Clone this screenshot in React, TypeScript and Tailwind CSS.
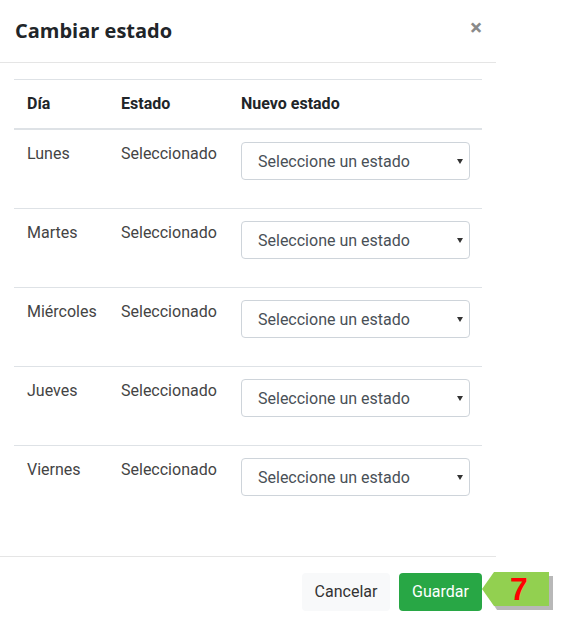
const days = ["Lunes", "Martes", "Miércoles", "Jueves", "Viernes"];

function EstadoSelect() {
  return (
    <div className="relative mb-4 h-[38px] w-[229px] rounded-[4px] border border-[#ced4da] bg-white">
      <span className="absolute left-[16px] top-[7px] text-[16px] leading-[24px] text-[#495057]">
        Seleccione un estado
      </span>
      <svg
        className="absolute right-[6px] top-[16px]"
        width="6"
        height="5"
        viewBox="0 0 6 5"
      >
        <path d="M0 0 H6 L3 5 Z" fill="#333" />
      </svg>
    </div>
  );
}

export default function App() {
  return (
    <div className="h-[639px] w-[565px] bg-white font-['Roboto',sans-serif] text-[#212529]">
      <div className="w-[496px] bg-white">
        {/* Header */}
        <div className="flex h-[63px] items-center justify-between border-b border-[#e5e5e5] pl-[15px] pr-[14px]">
          <h1 className="font-['Open_Sans',sans-serif] text-[20px] font-bold text-[#212529]">
            Cambiar estado
          </h1>
          <span className="-mt-[6px] text-[22px] font-bold leading-none text-[#8a8a8a]">
            ×
          </span>
        </div>

        {/* Body */}
        <div className="px-[14px] pt-[16px] pb-[32px]">
          <table className="w-[468px] table-fixed border-collapse text-left text-[16px]">
            <colgroup>
              <col className="w-[107px]" />
              <col className="w-[120px]" />
              <col />
            </colgroup>
            <thead>
              <tr className="border-t border-b-2 border-t-[#dee2e6] border-b-[#dee2e6]">
                <th className="py-[12px] pl-[13px] font-bold leading-[24px]">Día</th>
                <th className="py-[12px] font-bold leading-[24px]">Estado</th>
                <th className="py-[12px] font-bold leading-[24px]">Nuevo estado</th>
              </tr>
            </thead>
            <tbody>
              {days.map((d, i) => (
                <tr
                  key={d}
                  className={i < days.length - 1 ? "border-b border-[#dee2e6]" : ""}
                >
                  <td className="pl-[13px] pt-[12px] pb-[12px] align-top leading-[24px] text-[#444]">
                    {d}
                  </td>
                  <td className="pt-[12px] pb-[12px] align-top leading-[24px] text-[#444]">
                    Seleccionado
                  </td>
                  <td className="pt-[12px] pb-[12px] align-top">
                    <EstadoSelect />
                  </td>
                </tr>
              ))}
            </tbody>
          </table>
        </div>

        {/* Footer */}
        <div className="flex items-center justify-end gap-[9px] border-t border-[#e5e5e5] pt-[16px] pr-[14px]">
          <button className="h-[38px] w-[88px] rounded-[4px] bg-[#f8f9fa] text-[16px] text-[#333]">
            Cancelar
          </button>
          <div className="relative">
            <button className="h-[38px] w-[83px] rounded-[4px] bg-[#28a745] text-[16px] text-white">
              Guardar
            </button>
            {/* step marker */}
            <div className="absolute left-[83px] top-[-1px] h-[36px] w-[72px]">
              <svg
                className="absolute left-0 top-0"
                width="76"
                height="40"
                viewBox="0 0 76 40"
              >
                <path d="M4 21 L15 4 H71 V38 H15 Z" fill="#9a9a9a" opacity="0.7" />
                <path d="M0 17 L12 0 H67 V34 H12 Z" fill="#92d050" />
              </svg>
              <span className="absolute left-[28px] top-[-3px] font-['Liberation_Sans',Arial,sans-serif] text-[32px] font-bold leading-[40px] text-[#ff0000]">
                7
              </span>
            </div>
          </div>
        </div>
      </div>
    </div>
  );
}
